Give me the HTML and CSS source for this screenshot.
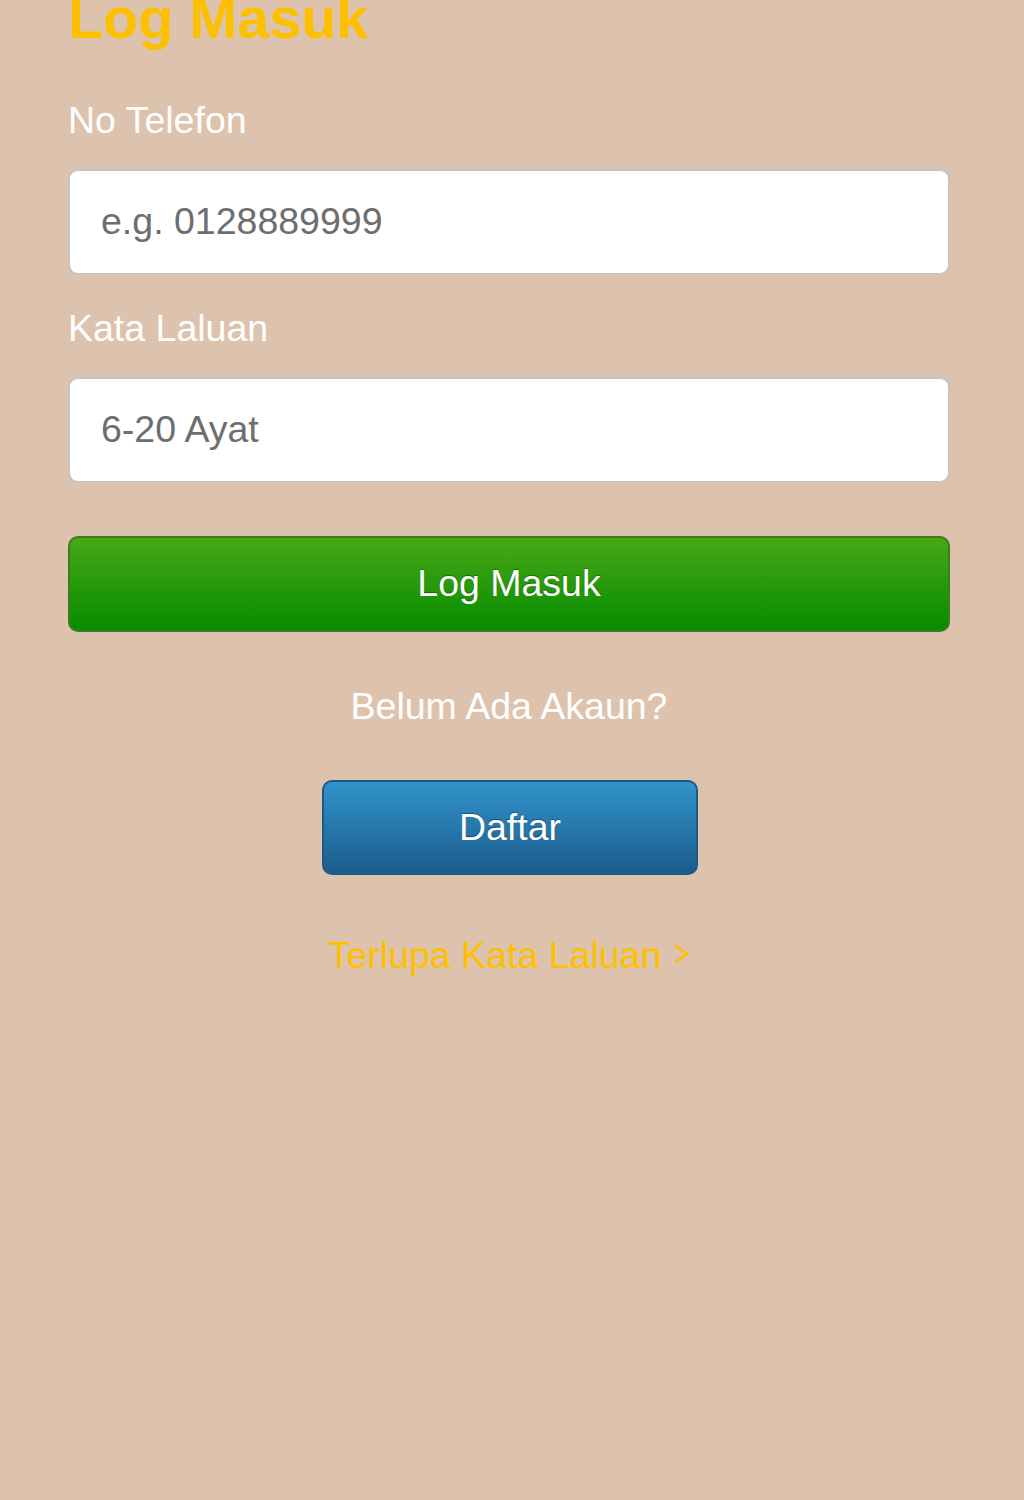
FILE: index.html
```html
<!DOCTYPE html>
<html>
<head>
  <meta charset="utf-8">
  <title>Log Masuk</title>
  <link rel="stylesheet" href="styles.css">
</head>
<body>
  <div class="container">
    <h1 class="title">Log Masuk</h1>

    <form class="login-form">
      <label class="field-label" for="phone">No Telefon</label>
      <input type="text" id="phone" class="input-field" placeholder="e.g. 0128889999">

      <label class="field-label" for="password">Kata Laluan</label>
      <input type="password" id="password" class="input-field" placeholder="6-20 Ayat">

      <button type="button" class="button btn-login">Log Masuk</button>
    </form>

    <p class="signup-text">Belum Ada Akaun?</p>

    <div class="signup-row">
      <button type="button" class="button btn-register">Daftar</button>
    </div>

    <a class="forgot-link" href="#">
      Terlupa Kata Laluan
      <svg class="chevron" viewBox="0 0 18 20" fill="none" stroke="currentColor">
        <path d="M3 1.5l12.5 8.5-12.5 8.5" stroke-width="2.6" stroke-linejoin="miter"/>
      </svg>
    </a>
  </div>
</body>
</html>
```

FILE: styles.css
```css
:root {
  --background: #ddc3ae;
  --accent: #fdc000;
  --label: #ffffff;
  --input-border: #c4c4c4;
  --placeholder: #6e6e6e;
  --system-font: "Liberation Sans", Arial, sans-serif;
}

body {
  margin: 0;
  background: var(--background);
  font-family: var(--system-font);
  font-size: 37.5px;
  min-height: 1500px;
}

.container {
  padding: 0 74px 0 68px;
}

.title {
  margin: -10px 0 0;
  font-size: 57.5px;
  line-height: 1;
  font-weight: 700;
  color: var(--accent);
}

.login-form {
  display: flex;
  flex-direction: column;
}

.field-label {
  display: block;
  margin-top: 50px;
  line-height: 44px;
  color: var(--label);
}

.input-field + .field-label {
  margin-top: 31px;
}

.input-field {
  box-sizing: border-box;
  width: 100%;
  height: 106px;
  margin-top: 27px;
  padding: 0 31px;
  border: 2.5px solid var(--input-border);
  border-radius: 10px;
  background: #ffffff;
  color: #555555;
  font-family: var(--system-font);
  font-size: 37.5px;
}

.input-field::placeholder {
  color: var(--placeholder);
  opacity: 1;
}

.button {
  box-sizing: border-box;
  height: 96px;
  border-radius: 10px;
  color: #ffffff;
  font-family: var(--system-font);
  font-size: 37.5px;
  text-shadow: 0 -1px 1px rgba(0,0,0,0.35);
  cursor: pointer;
}

.btn-login {
  width: 100%;
  margin-top: 53px;
  border: 2.5px solid #3b7d1e;
  background: linear-gradient(to bottom, #48a816, #068c00);
}

.signup-text {
  margin: 52px 0 0;
  line-height: 44px;
  text-align: center;
  color: var(--label);
}

.signup-row {
  display: flex;
  justify-content: center;
  margin-top: 52px;
}

.btn-register {
  width: 376px;
  height: 95px;
  margin-left: 2px;
  border: 2.5px solid #1c5a8a;
  background: linear-gradient(to bottom, #3094ca, #1d5b8c);
}

.forgot-link {
  display: flex;
  align-items: center;
  justify-content: center;
  gap: 11px;
  margin-top: 58px;
  line-height: 44px;
  color: var(--accent);
  text-decoration: none;
}

.chevron {
  width: 18px;
  height: 20px;
  margin-top: -2px;
}
```
